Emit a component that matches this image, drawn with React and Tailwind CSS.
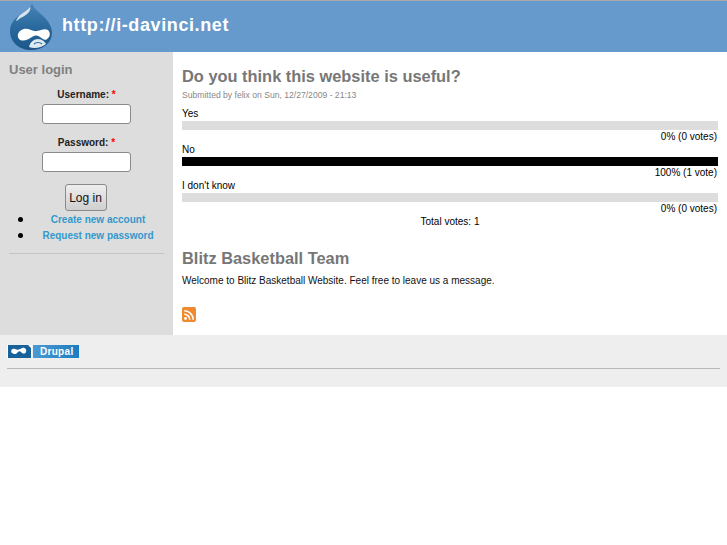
import React from "react";

const Logo = () => (
  <svg width="44" height="49" viewBox="0 0 44 49">
    <defs>
      <linearGradient id="drop" x1="0" y1="0" x2="0" y2="1">
        <stop offset="0" stopColor="#4a86b8" />
        <stop offset="0.5" stopColor="#2a6a9e" />
        <stop offset="1" stopColor="#1c5788" />
      </linearGradient>
    </defs>
    <path d="M22 1C23 7 30 10 36 17C40 22 42 26 42 31C42 41 33 48 21 48C9 48 0 40 0 29C0 19 8 14 14 10C18 7 21 5 22 1z" fill="url(#drop)" />
    <path d="M20 5C16 10 10 11 7 17C6 19 6 20 8 18C11 15 16 14 19 10C20 8 21 6 20 5z" fill="#d5e4ef" />
    <path d="M9 37C6 33 9 28 14 27C19 26 23 30 27 29C31 28 35 26 38 28C41 31 40 35 37 37C35 39 33 37 30 35C27 33 25 33 22 35C18 38 12 40 9 37z" fill="#ffffff" />
    <path d="M19 45C20 40 24 37 28 37C32 37 35 40 36 42C31 46 24 47 19 45z" fill="#dfe9f1" />
    <path d="M24 42C26 40 30 40 32 42" fill="none" stroke="#2a6a9e" strokeWidth="1.2" />
  </svg>
);

const PollBar = ({ label, fill, result }) => (
  <div>
    <div className="h-[12px] leading-[14px]">{label}</div>
    <div className={`h-[9px] mt-[2px] ${fill ? "bg-black" : "bg-[#dddddd]"}`}></div>
    <div className="text-right h-[12px] leading-[14px] mr-[1px]">{result}</div>
  </div>
);

const LoginField = ({ label }) => (
  <div className="flex flex-col items-center">
    <label className="font-bold text-[10px] leading-[13px] text-[#222222]">
      {label}: <span className="text-[#ff0000]">*</span>
    </label>
    <input className="w-[89px] h-[20px] mt-[3px] bg-white border border-[#8a8a8a] rounded-[3px]" />
  </div>
);

export default function App() {
  return (
    <div className="font-['Liberation_Sans',Arial,sans-serif] text-[10px] text-black">
      <header className="h-[52px] bg-[#6699cc] border-t border-[#a9a9a9] flex items-start pl-[10px] pt-[1px]">
        <Logo />
        <a className="ml-[8px] mt-[13px] font-bold text-[18px] leading-[21px] tracking-[0.6px] text-white">
          http://i-davinci.net
        </a>
      </header>

      <div className="flex h-[283px]">
        <aside className="w-[173px] shrink-0 bg-[#dddddd] px-[9px]">
          <h2 className="mt-[11px] font-bold text-[13px] leading-[14px] text-[#808080]">User login</h2>
          <div className="mt-[11px] flex flex-col gap-[12px]">
            <LoginField label="Username" />
            <LoginField label="Password" />
          </div>
          <div className="flex justify-center mt-[12px] pr-[2px]">
            <button className="w-[42px] h-[27px] text-[12px] text-[#111111] border border-[#8a8a8a] rounded-[3px] bg-gradient-to-b from-[#eeeeee] to-[#cfcfcf]">
              Log in
            </button>
          </div>
          <ul className="font-bold text-[10px] text-[#3399cc] text-center">
            <li className="relative h-[16px] leading-[18px] pl-[23px]">
              <span className="absolute left-[9px] top-[6px] w-[5px] h-[5px] rounded-full bg-black"></span>
              Create new account
            </li>
            <li className="relative h-[16px] leading-[18px] pl-[23px]">
              <span className="absolute left-[9px] top-[6px] w-[5px] h-[5px] rounded-full bg-black"></span>
              Request new password
            </li>
          </ul>
          <hr className="mt-[10px] border-0 h-[1px] bg-[#c4c4c4]" />
        </aside>

        <main className="flex-1 bg-white px-[9px]">
          <h1 className="mt-[14px] font-bold text-[16.4px] leading-[20px] text-[#777777]">Do you think this website is useful?</h1>
          <p className="mt-[3px] text-[8.6px] leading-[12px] text-[#888888]">Submitted by felix on Sun, 12/27/2009 - 21:13</p>
          <div className="mt-[6px] flex flex-col gap-[1px]">
            <PollBar label="Yes" result="0% (0 votes)" />
            <PollBar label="No" fill result="100% (1 vote)" />
            <PollBar label="I don't know" result="0% (0 votes)" />
          </div>
          <div className="text-center h-[12px] leading-[14px] mt-[1px]">Total votes: 1</div>
          <h2 className="mt-[21px] font-bold text-[16.4px] leading-[20px] text-[#777777]">Blitz Basketball Team</h2>
          <p className="mt-[6px] leading-[14px] text-[#111111]">Welcome to Blitz Basketball Website. Feel free to leave us a message.</p>
          <svg className="mt-[19px] block" width="14" height="15" viewBox="0 0 14 15">
            <rect width="14" height="15" rx="2" fill="#f08a30" />
            <circle cx="3.5" cy="11.5" r="1.4" fill="#fff" />
            <path d="M2.2 7.2a5.5 5.5 0 0 1 5.6 5.6M2.2 3.8a9 9 0 0 1 9 9" fill="none" stroke="#fff" strokeWidth="1.6" />
          </svg>
        </main>
      </div>

      <footer className="h-[52px] bg-[#eeeeee] px-[7px] pt-[10px]">
        <div className="flex h-[13px] w-[72px]">
          <div className="w-[25px] bg-white">
            <svg width="25" height="13" viewBox="0 0 25 13">
              <path d="M1 0h20l3 3v10H1z" fill="#17629b" />
              <path d="M5 8c-2-2 0-5 3-4 2 1 4 1 7-1 3-1 5 2 4 4-1 2-3 2-5 0-2-2-3 0-5 2-1 0-3 0-4-1z" fill="#fff" />
            </svg>
          </div>
          <div className="flex-1 ml-[1px] bg-gradient-to-r from-[#4a9ad4] to-[#1a7cc0] text-white font-bold text-[10px] tracking-[0.3px] leading-[13px] pl-[7px]">
            Drupal
          </div>
        </div>
        <hr className="mt-[10px] border-0 h-[1px] bg-[#b9b9b9]" />
      </footer>
    </div>
  );
}
